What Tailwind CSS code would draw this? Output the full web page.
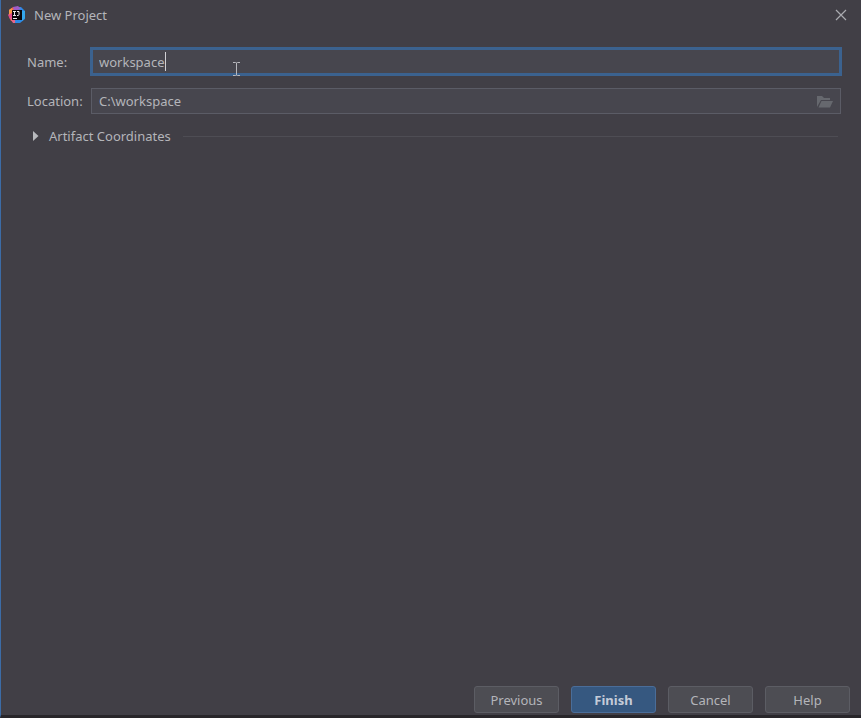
<!DOCTYPE html>
<html lang="en">
<head>
    <meta charset="UTF-8">
    <meta name="viewport" content="width=device-width, initial-scale=1.0">
    <title>New Project</title>
    <script src="https://cdn.jsdelivr.net/npm/@tailwindcss/browser@4"></script>
</head>
<body class="bg-[#413f46] text-[#b4b5ba] text-[13px] leading-5 font-['Noto_Sans','Open_Sans',sans-serif]">
<div class="min-h-screen flex flex-col border-l border-l-[#3c6ca6] border-b-3 border-b-[#28262a]">
    <!-- Title bar -->
    <header class="h-[30px] flex items-center justify-between pl-[7px] pr-[14px]">
        <div class="flex items-center gap-2">
            <svg class="size-[18px]" viewBox="0 0 18 18" aria-hidden="true">
                <path d="M1 4l4-3 6 1-2 14-6-1-2-4z" fill="#f0624a"/>
                <path d="M0 9l3-4 2 6-3 2z" fill="#e0488c"/>
                <path d="M2 12l3-1 4 3 0 3-4 0z" fill="#e8668a"/>
                <path d="M1 4l3-2 1 4-4 3z" fill="#f79a4a"/>
                <path d="M8 1l5 0 4 4 0 8-5 4-5 0z" fill="#2b8ae6"/>
                <path d="M5 1l5-1 3 3-7 2z" fill="#a05cc8"/>
                <path d="M14 5l3 0 0 7-3 3z" fill="#35a6ea"/>
                <path d="M4 4h10v10H4z" fill="#08070b"/>
                <path d="M5 5.500h3M6.500 5.500v4M5 9.500h3M9 5.500h2v3q0 1-1 1h-1M5 12.500h4" fill="none" stroke="#e9e8ee"/>
            </svg>
            <h1>New Project</h1>
        </div>
        <button type="button" aria-label="Close">
            <svg class="size-3" viewBox="0 0 12 12" fill="none" stroke="#aaabb0" stroke-width="1.200">
                <path d="M1 1l10 10M11 1L1 11"/>
            </svg>
        </button>
    </header>

    <!-- Project form -->
    <main class="grow pl-[26px] pr-5 pt-[18px]">
        <form id="projectForm" class="grid grid-cols-[64px_1fr] items-center gap-y-[13px]">
            <label for="name">Name:</label>
            <div class="relative">
                <input type="text" id="name" name="name" value="workspace"
                       class="block w-full h-[27px] px-[6px] bg-[#47464e] border-2 border-[#3b628f] ring-1 ring-[#3b628f] outline-none">
                <span class="absolute left-[74px] top-1 w-px h-[19px] bg-[#d0d0d4]"></span>
                <!-- I-beam pointer -->
                <svg class="absolute left-[142px] top-[14px] w-[7px] h-[14px]" viewBox="0 0 7 14" fill="none" stroke="#b8b8bd" aria-hidden="true">
                    <path d="M0 .5h2.500q1 0 1 1 0-1 1-1H7M3.500 1v12M0 13.500h2.500q1 0 1-1 0 1 1 1H7"/>
                </svg>
            </div>

            <label for="location">Location:</label>
            <div class="relative">
                <input type="text" id="location" name="location" value="C:\workspace"
                       class="block w-full h-[26px] pl-[7px] pr-8 bg-[#47464e] border border-[#5b5c66] outline-none">
                <button type="button" aria-label="Browse" class="absolute right-2 top-[7px]">
                    <svg class="w-4 h-[13px]" viewBox="0 0 16 13" fill="#66686e">
                        <path d="M0 12V1h5l2 2h6v2H4z"/>
                        <path d="M4.500 6H16l-3 6.500H1.500z"/>
                    </svg>
                </button>
            </div>
        </form>

        <div class="flex items-center mt-3 pr-[3px]">
            <button type="button" aria-expanded="false" class="flex items-center gap-[10px] pl-[6px]">
                <svg class="w-[6px] h-[10px]" viewBox="0 0 6 10" fill="#b8b9bd" aria-hidden="true">
                    <path d="M0 0l5.500 5L0 10z"/>
                </svg>
                Artifact Coordinates
            </button>
            <div class="grow h-px ml-3 bg-[#4e4d54]"></div>
        </div>
    </main>

    <!-- Actions -->
    <footer class="flex justify-end gap-3 pr-[11px] pb-[2px]">
        <button type="button" class="w-[85px] h-[27px] rounded-[3px] bg-[#4d4d53] border border-[#5c5d64]">Previous</button>
        <button type="submit" form="projectForm" class="w-[85px] h-[27px] rounded-[3px] bg-[#365880] border border-[#4a6d99] text-[#c4cbd8] font-bold">Finish</button>
        <button type="button" class="w-[85px] h-[27px] rounded-[3px] bg-[#4d4d53] border border-[#5c5d64]">Cancel</button>
        <button type="button" class="w-[85px] h-[27px] rounded-[3px] bg-[#4d4d53] border border-[#5c5d64]">Help</button>
    </footer>
</div>
</body>
</html>
